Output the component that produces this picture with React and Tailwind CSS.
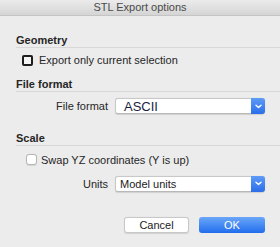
import React from 'react';

const Chevron = () => (
  <svg width="7" height="5" viewBox="0 0 7 5" fill="none">
    <path d="M1 1.2 L3.5 3.6 L6 1.2" stroke="white" strokeWidth="1.4" strokeLinecap="round" strokeLinejoin="round" />
  </svg>
);

const Select = ({ value, big }) => (
  <div className="ml-[7px] flex h-[16px] w-[150px] items-stretch rounded-[3px] border border-[#c8c8c8] border-b-[#b8b8b8] bg-white shadow-[0_0.5px_1px_rgba(0,0,0,0.12)]">
    <div
      className={
        big
          ? 'flex-1 pl-[8px] text-[13px] leading-[15px] text-[#1c1c44]'
          : 'flex-1 pl-[4px] text-[11px] leading-[15px] text-[#222]'
      }
    >
      {value}
    </div>
    <div className="-my-px -mr-px flex w-[14px] items-center justify-center rounded-r-[3px] bg-gradient-to-b from-[#5d9bf7] to-[#2a6ee9]">
      <Chevron />
    </div>
  </div>
);

const SectionHeader = ({ children, className }) => (
  <div className={'ml-4 border-b border-[#d8d8d8] text-[11px] font-bold leading-[14px] text-[#262626] ' + className}>
    {children}
  </div>
);

export default function App() {
  return (
    <div
      className="flex h-[247px] w-[280px] flex-col bg-[#ececec] text-[11px] text-[#262626]"
      style={{ fontFamily: '"Liberation Sans", Arial, sans-serif' }}
    >
      {/* Title bar */}
      <div className="h-[16px] border-b border-[#c4c4c4] bg-gradient-to-b from-[#ebebeb] to-[#d5d5d5] text-center text-[11px] leading-[15px] text-[#4a4a4a]">
        STL Export options
      </div>

      <SectionHeader className="mt-[17px]">Geometry</SectionHeader>
      <div className="mt-[5px] flex h-[14px] items-center leading-[14px]">
        <div className="ml-[22px] h-[11px] w-[11px] rounded-[2px] border-2 border-[#1e1e1e] bg-[#f4f4f4]" />
        <span className="ml-[6px]">Export only current selection</span>
      </div>

      <SectionHeader className="mt-[10px]">File format</SectionHeader>
      <div className="mt-[6px] flex items-center justify-end pr-[15px]">
        <span>File format</span>
        <Select value="ASCII" big />
      </div>

      <SectionHeader className="mt-[16px]">Scale</SectionHeader>
      <div className="mt-[7px] flex h-[14px] items-center leading-[14px]">
        <div className="ml-[26px] h-[11px] w-[11px] rounded-[3px] border border-[#b5b5b5] bg-white shadow-[0_0.5px_1px_rgba(0,0,0,0.1)]" />
        <span className="ml-[4px]">Swap YZ coordinates (Y is up)</span>
      </div>

      <div className="mt-[9px] flex items-center justify-end pr-[15px]">
        <span>Units</span>
        <Select value="Model units" />
      </div>

      <div className="mt-[25px] flex justify-end gap-[10px] pr-[15px]">
        <button className="h-[16px] w-[65px] rounded-[3px] border border-[#c8c8c8] bg-white text-[11px] leading-[14px] text-[#222] shadow-[0_0.5px_1px_rgba(0,0,0,0.12)]">
          Cancel
        </button>
        <button className="h-[16px] w-[66px] rounded-[3px] bg-gradient-to-b from-[#6aa7f8] to-[#1f6cec] text-[11px] leading-[16px] text-white">
          OK
        </button>
      </div>
    </div>
  );
}
